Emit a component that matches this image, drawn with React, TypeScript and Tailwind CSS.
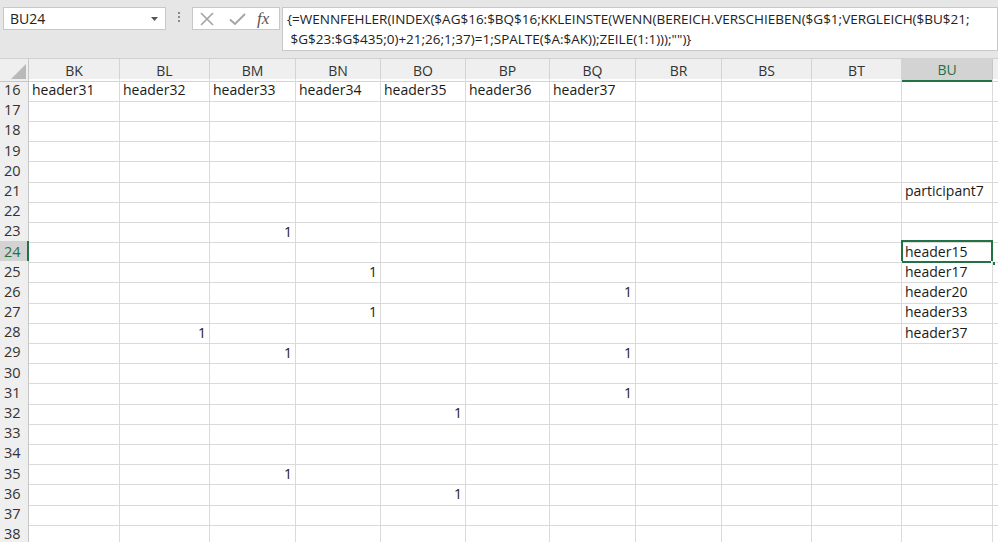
import React from 'react';

const COLS = ['BK', 'BL', 'BM', 'BN', 'BO', 'BP', 'BQ', 'BR', 'BS', 'BT', 'BU'];
const GRID = 'grid grid-cols-[29px_91px_90px_86px_85px_85px_84px_86px_86px_90px_90px_91px_1fr]';

type Cell = { text: string; num?: boolean };

const DATA: Record<number, Record<string, Cell>> = {
  16: {
    BK: { text: 'header31' },
    BL: { text: 'header32' },
    BM: { text: 'header33' },
    BN: { text: 'header34' },
    BO: { text: 'header35' },
    BP: { text: 'header36' },
    BQ: { text: 'header37' },
  },
  21: { BU: { text: 'participant7' } },
  23: { BM: { text: '1', num: true } },
  24: { BU: { text: 'header15' } },
  25: { BN: { text: '1', num: true }, BU: { text: 'header17' } },
  26: { BQ: { text: '1', num: true }, BU: { text: 'header20' } },
  27: { BN: { text: '1', num: true }, BU: { text: 'header33' } },
  28: { BL: { text: '1', num: true }, BU: { text: 'header37' } },
  29: { BM: { text: '1', num: true }, BQ: { text: '1', num: true } },
  31: { BQ: { text: '1', num: true } },
  32: { BO: { text: '1', num: true } },
  35: { BM: { text: '1', num: true } },
  36: { BO: { text: '1', num: true } },
};

const ROWS = Array.from({ length: 23 }, (_, i) => 16 + i);

const FormulaBar: React.FC = () => (
  <div className="relative h-[59px] bg-[#e6e6e6] border-b border-[#d0d0d0]">
    <div className="absolute left-[3px] top-[7px] w-[163px] h-[23px] bg-white border border-[#c8c8c8] flex items-center pl-[6px] text-[14px] text-[#222]">
      BU24
      <svg className="absolute right-[7px] top-[9px]" width="7" height="4" viewBox="0 0 7 4">
        <path d="M0 0 L7 0 L3.5 4 Z" fill="#555" />
      </svg>
    </div>
    <div className="absolute left-[178px] top-[12px] flex flex-col gap-[2px]">
      <span className="w-[2px] h-[2px] bg-[#8a8a8a]" />
      <span className="w-[2px] h-[2px] bg-[#8a8a8a]" />
      <span className="w-[2px] h-[2px] bg-[#8a8a8a]" />
    </div>
    <div className="absolute left-[192px] top-[7px] w-[88px] h-[23px] bg-white border border-[#c8c8c8] flex items-center">
      <svg className="ml-[7px]" width="14" height="14" viewBox="0 0 14 14">
        <path d="M1 1 L13 13 M13 1 L1 13" stroke="#a3a3a3" strokeWidth="1.6" />
      </svg>
      <svg className="ml-[15px]" width="17" height="14" viewBox="0 0 17 14">
        <path d="M1 7.5 L6 12 L16 2" stroke="#a3a3a3" strokeWidth="1.8" fill="none" />
      </svg>
      <span className="ml-[11px] text-[17px] italic text-[#555] font-['Liberation_Serif',serif] leading-none">fx</span>
    </div>
    <div className="absolute left-[282px] right-0 top-[7px] h-[44px] bg-white border border-[#c8c8c8] pl-[4px] pt-[1px] text-[13.5px] leading-[20px] text-[#222] whitespace-pre">
      <div>{'{=WENNFEHLER(INDEX($AG$16:$BQ$16;KKLEINSTE(WENN(BEREICH.VERSCHIEBEN($G$1;VERGLEICH($BU$21;'}</div>
      <div>{' $G$23:$G$435;0)+21;26;1;37)=1;SPALTE($A:$AK));ZEILE(1:1)));"")}'}</div>
    </div>
  </div>
);

const App: React.FC = () => {
  return (
    <div className="w-[998px] h-[542px] overflow-hidden bg-white font-['Open_Sans',sans-serif] text-[#1a1a1a]">
      <FormulaBar />
      <div className={`${GRID} h-[20px] bg-[#efefef] text-[14px]`}>
        <div className="relative border-r border-b border-[#c6c6c6]">
          <svg className="absolute right-[2px] bottom-[2px]" width="15" height="15" viewBox="0 0 15 15">
            <path d="M15 0 L15 15 L0 15 Z" fill="#b9b9b9" />
          </svg>
        </div>
        {COLS.map((c) =>
          c === 'BU' ? (
            <div key={c} className="flex items-center justify-center bg-[#d3d3d3] border-r border-[#c6c6c6] border-b-2 border-b-[#217346] text-[#217346]">
              {c}
            </div>
          ) : (
            <div key={c} className="flex items-center justify-center border-r border-b border-[#d4d4d4] text-[#333]">
              {c}
            </div>
          )
        )}
        <div className="border-b border-[#d4d4d4]" />
      </div>
      {ROWS.map((r) => {
        const row = DATA[r] || {};
        const sel = r === 24;
        return (
          <div key={r} className={`${GRID} h-[20.2px] text-[14px]`}>
            <div
              className={
                sel
                  ? 'flex items-center pl-[4px] text-[14.5px] bg-[#d3d3d3] text-[#217346] border-r-2 border-r-[#217346] border-b border-[#c6c6c6]'
                  : 'flex items-center pl-[4px] text-[14.5px] bg-[#efefef] text-[#333] border-r border-b border-[#c6c6c6]'
              }
            >
              {r}
            </div>
            {COLS.map((c) => {
              const cell = row[c];
              const isSel = sel && c === 'BU';
              return (
                <div
                  key={c}
                  className={`relative flex items-center border-r border-b border-[#dadada] whitespace-nowrap ${
                    cell?.num ? 'justify-end pr-[3px]' : 'pl-[3px]'
                  }`}
                >
                  {cell?.text}
                  {isSel && (
                    <>
                      <div className="absolute left-[-1px] top-[-1px] right-[-1px] bottom-[-1px] border-2 border-[#217346]" />
                      <div className="absolute right-[-4px] bottom-[-4px] w-[5px] h-[5px] bg-[#217346] border border-white" />
                    </>
                  )}
                </div>
              );
            })}
            <div className="border-b border-[#dadada]" />
          </div>
        );
      })}
    </div>
  );
};

export default App;
